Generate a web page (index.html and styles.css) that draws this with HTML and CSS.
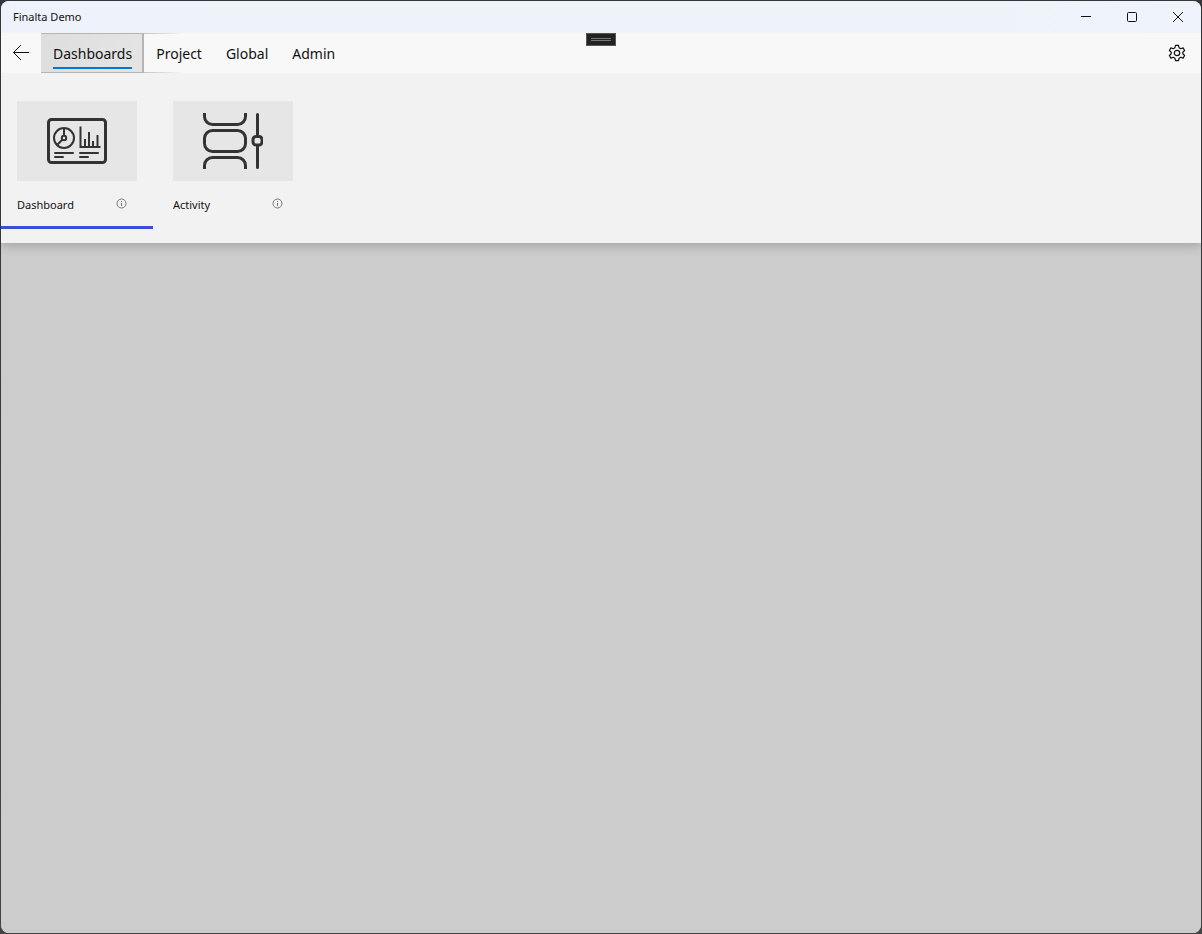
FILE: index.html
```
<!DOCTYPE html>
<html lang="en">
<head>
<meta charset="utf-8">
<title>Finalta Demo</title>
<link rel="stylesheet" href="styles.css">
</head>
<body>
<div class="window">
  <header class="titlebar">
    <h1 class="title">Finalta Demo</h1>
    <div class="controls">
      <button class="control" type="button" aria-label="Minimize"><svg width="12" height="12" viewBox="0 0 12 12"><path d="M1 5.500h10"/></svg></button>
      <button class="control" type="button" aria-label="Maximize"><svg width="12" height="12" viewBox="0 0 12 12"><rect x="1.5" y="1.5" width="9" height="9" rx="1"/></svg></button>
      <button class="control" type="button" aria-label="Close"><svg width="12" height="12" viewBox="0 0 12 12"><path d="M1 1l10 10M11 1L1 11"/></svg></button>
    </div>
  </header>
  <nav class="navbar">
    <button class="nav-icon" type="button" aria-label="Back"><svg width="18" height="18" viewBox="0 0 18 18"><path d="M17 8.5H1.5M9 1L1.5 8.5L9 16"/></svg></button>
    <button class="tab selected" type="button"><span class="tab-label">Dashboards</span></button>
    <button class="tab after" type="button"><span class="tab-label">Project</span></button>
    <button class="tab" type="button"><span class="tab-label">Global</span></button>
    <button class="tab" type="button"><span class="tab-label">Admin</span></button>
    <button class="nav-icon settings" type="button" aria-label="Settings"><svg width="18" height="18" viewBox="0 0 18 18"><path d="M7.500 1.400h3l.6 2.400 1.600.9 2.400-.8 1.500 2.600-1.800 1.700v1.600l1.800 1.700-1.500 2.600-2.400-.8-1.600.9-.6 2.400h-3l-.6-2.400-1.600-.9-2.400.8-1.500-2.600 1.800-1.700V8.200L1.400 6.500l1.500-2.600 2.400.8 1.600-.9z" stroke-width="1.200" stroke-linejoin="round"/><circle cx="9" cy="9" r="2.700" stroke-width="1.200"/></svg></button>
    <button class="grip" type="button" aria-label="Show toolbar"></button>
  </nav>
  <section class="ribbon">
    <article class="card selected">
      <button class="tile" type="button" aria-label="Open Dashboard">
        <svg width="60" height="60" viewBox="0 0 60 60">
          <rect class="heavy" x="1.5" y="8.5" width="57" height="43" rx="3"/>
          <g class="medium"><circle cx="17" cy="27" r="10"/><circle cx="17" cy="27" r="2.2"/><path d="M17 17v8M15.500 28.500L10 34"/></g>
          <path class="medium" d="M33.500 15.500v20.500h20"/>
          <path class="bars" d="M38 36v-8M42 36V21M46 36v-6M50.500 36V24"/>
          <path class="thin" d="M8 42h18M8 46h8M33 42h18M33 46h8"/>
        </svg>
      </button>
      <div class="caption"><span>Dashboard</span><button class="info" type="button" aria-label="About Dashboard"><svg width="11" height="11" viewBox="0 0 11 11"><circle cx="5.500" cy="5.500" r="4.500"/><path d="M5.500 5v3M5.500 3v1"/></svg></button></div>
    </article>
    <article class="card">
      <button class="tile" type="button" aria-label="Open Activity">
        <svg width="60" height="60" viewBox="0 1 60 60">
          <g class="heavy"><path d="M1.500 3v3.500a8 8 0 0 0 8 8h25a8 8 0 0 0 8-8V3M1.500 59v-3.500a8 8 0 0 1 8-8h25a8 8 0 0 1 8 8V59"/><rect x="1.500" y="20.500" width="41" height="21" rx="8"/><path d="M54.500 4.500V26M54.500 35.500V57.500" stroke-linecap="round"/><rect x="50" y="26.500" width="9" height="8.500" rx="3"/></g>
        </svg>
      </button>
      <div class="caption"><span>Activity</span><button class="info" type="button" aria-label="About Activity"><svg width="11" height="11" viewBox="0 0 11 11"><circle cx="5.500" cy="5.500" r="4.500"/><path d="M5.500 5v3M5.500 3v1"/></svg></button></div>
    </article>
  </section>
  <main class="workspace"></main>
</div>
</body>
</html>
```
FILE: styles.css
```
* { box-sizing: border-box; }
body {
  margin: 0;
  min-height: 100vh;
  display: flex;
  padding: 1px;
  background: linear-gradient(#35353a 0 20%, #444 90%);
  color: #111;
  font-family: "Segoe UI", "Noto Sans", sans-serif;
}
button {
  margin: 0;
  padding: 0;
  border: 0;
  background: transparent;
  color: inherit;
  font: inherit;
}
svg { display: block; fill: none; stroke: #111; stroke-width: 1; }
.window {
  flex: 1;
  display: flex;
  flex-direction: column;
  overflow: hidden;
  border-radius: 8px;
  background: #ccc;
}
.titlebar {
  display: flex;
  justify-content: space-between;
  height: 32px;
  padding-left: 12px;
  background: linear-gradient(90deg, #eef3fb, #edf3f8 50%, #eff3fb);
}
.title { margin: 0; font-size: 11px; font-weight: 400; line-height: 32px; }
.controls { display: flex; }
.control { display: grid; place-items: center; width: 46px; }
.navbar { position: relative; z-index: 1; display: flex; height: 40px; background: #f8f8f8; }
.nav-icon { display: grid; place-items: center; width: 40px; }
.settings { width: 48px; margin-left: auto; }
.tab { padding: 0 12px; font-size: 14px; }
.tab-label {
  display: block;
  height: 36px;
  margin-bottom: 4px;
  line-height: 42px;
}
.tab.selected {
  border: 1px solid #b5b5b5;
  border-left: 0;
  border-right-width: 2px;
  background: linear-gradient(90deg, #dedede, #e4e4e4);
  padding-right: 10px;
}
.tab.selected .tab-label {
  margin-bottom: 3px;
  height: 35px;
  line-height: 39px;
  border-bottom: 2px solid #0078d7;
}
.tab.after {
  background: linear-gradient(90deg, #c4c4c4, #f8f8f8 40px) top / 100% 1px no-repeat,
    linear-gradient(90deg, #c4c4c4, #f8f8f8 40px) bottom / 100% 1px no-repeat;
}
.grip {
  position: absolute;
  top: 0;
  left: 50%;
  width: 30px;
  height: 13px;
  margin-left: -15px;
  border: 1px solid #555;
  background: linear-gradient(#777 0 1px, #222 1px 2px, #777 2px 3px) center / 20px 3px no-repeat #222;
}
.ribbon {
  position: relative;
  display: flex;
  gap: 4px;
  height: 170px;
  padding: 12px 0 14px;
  background: #f2f2f2;
  box-shadow: 0 3px 10px rgba(0, 0, 0, .2);
}
.card { width: 152px; padding: 16px 16px 0; border-bottom: 3px solid transparent; }
.card.selected { border-color: #394fd6; }
.tile { display: grid; place-items: center; width: 120px; height: 80px; background: #e6e6e6; }
.tile svg { stroke: #333; }
.heavy { stroke-width: 3; }
.medium, .bars { stroke-width: 2; }
.thin { stroke-width: 2; stroke-linecap: round; }
.caption {
  display: flex;
  justify-content: space-between;
  margin-top: 14px;
  padding-right: 10px;
  font-size: 11px;
  line-height: 20px;
}
.info { align-self: flex-start; padding-top: 3px; }
.info svg { stroke: #777; }
.workspace { flex: 1; background: #ccc; }
```
